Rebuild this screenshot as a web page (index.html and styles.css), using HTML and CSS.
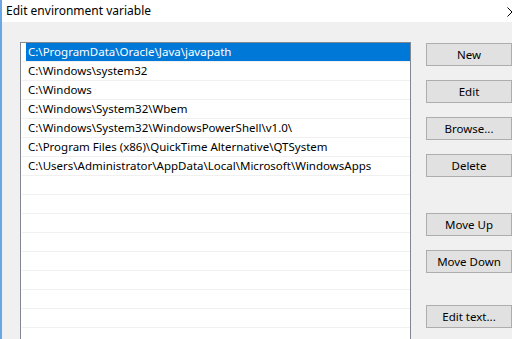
FILE: index.html
```html
<!DOCTYPE html>
<html lang="en">

<head>
    <meta charset="UTF-8">
    <title>Edit environment variable</title>
    <link rel="stylesheet" href="styles.css">
</head>

<body>
    <div class="window">
        <div class="titlebar">
            <span class="title">Edit environment variable</span>
            <svg class="close" width="10" height="10" viewBox="0 0 10 10">
                <path d="M0.5 0.5 L9.5 9.5 M9.5 0.5 L0.5 9.5" stroke="#000" stroke-width="1" fill="none" />
            </svg>
        </div>

        <div class="content">
            <div class="list">
                <div class="row"><span class="cell selected">C:\ProgramData\Oracle\Java\javapath</span></div>
                <div class="row"><span class="cell">C:\Windows\system32</span></div>
                <div class="row"><span class="cell">C:\Windows</span></div>
                <div class="row"><span class="cell">C:\Windows\System32\Wbem</span></div>
                <div class="row"><span class="cell">C:\Windows\System32\WindowsPowerShell\v1.0\</span></div>
                <div class="row"><span class="cell">C:\Program Files (x86)\QuickTime Alternative\QTSystem</span></div>
                <div class="row"><span class="cell">C:\Users\Administrator\AppData\Local\Microsoft\WindowsApps</span></div>
                <div class="row"></div>
                <div class="row"></div>
                <div class="row"></div>
                <div class="row"></div>
                <div class="row"></div>
                <div class="row"></div>
                <div class="row"></div>
                <div class="row"></div>
                <div class="row"></div>
            </div>

            <div class="buttons">
                <button type="button">New</button>
                <button type="button">Edit</button>
                <button type="button">Browse...</button>
                <button type="button">Delete</button>
                <button type="button" class="group-start">Move Up</button>
                <button type="button">Move Down</button>
                <button type="button" class="last">Edit text...</button>
            </div>
        </div>
    </div>
</body>

</html>
```

FILE: styles.css
```css
html,
body {
    margin: 0;
    overflow: hidden;
}

body {
    width: 512px;
    height: 339px;
    background: #f0f0f0;
    font-family: "Segoe UI", "Noto Sans", sans-serif;
    font-size: 11.5px;
    color: #000;
}

.window {
    height: 339px;
    border-left: 2px solid #6aa6e4;
}

.titlebar {
    height: 22px;
    background: #fff;
    display: flex;
    align-items: center;
    justify-content: space-between;
    padding-left: 4px;
}

.title {
    line-height: 22px;
    font-size: 12px;
}

.close {
    margin-right: -5px;
    margin-top: 2px;
}

.content {
    display: flex;
    align-items: flex-start;
    padding-top: 20px;
    padding-left: 18px;
    gap: 15px;
}

.list {
    width: 389px;
    height: 296px;
    overflow: hidden;
    background: #fff;
    border: 1px solid #828790;
    border-bottom: 0;
    flex-shrink: 0;
}

.row {
    height: 18px;
    border-bottom: 1px solid #f0f0f0;
    margin-left: 1px;
    padding-left: 4px;
    display: flex;
}

.cell {
    flex: 1;
    padding-left: 2px;
    line-height: 18px;
    white-space: nowrap;
}

.selected {
    background: #0078d7;
    color: #fff;
}

.buttons {
    display: flex;
    flex-direction: column;
    padding-top: 1px;
    gap: 14px;
}

.buttons button {
    width: 86px;
    height: 23px;
    padding: 0;
    background: #e1e1e1;
    border: 1px solid #adadad;
    font-family: inherit;
    font-size: 11.5px;
    color: #000;
}

.buttons .group-start {
    margin-top: 22px;
}

.buttons .last {
    margin-top: 18px;
}
```
